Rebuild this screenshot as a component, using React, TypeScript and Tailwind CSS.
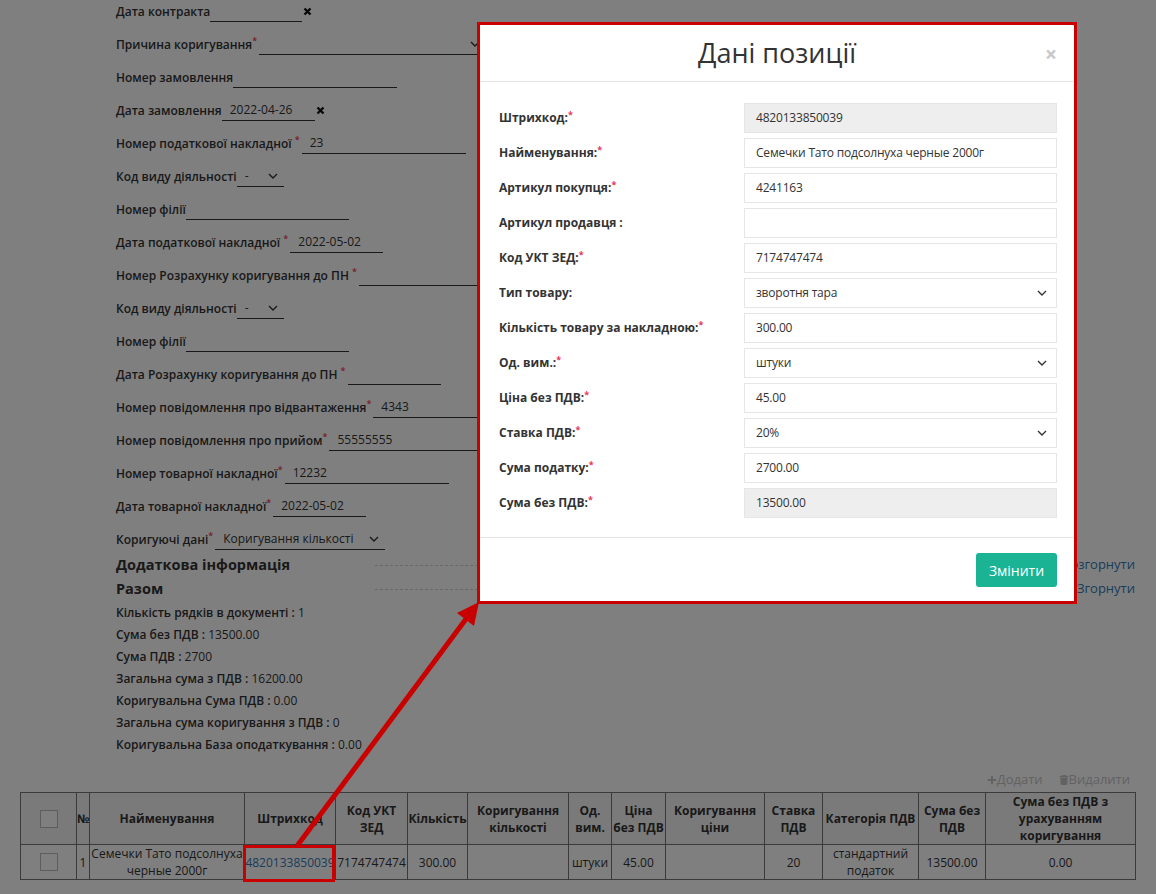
import { FaPlus, FaTrash, FaChevronUp } from "react-icons/fa";

type Field = {
	label: string;
	star?: "tight" | "space";
	kind: "text" | "date" | "select";
	w: string;
	value?: string;
	clear?: boolean;
};

const fields: Field[] = [
	{ label: "Дата контракта", kind: "date", w: "w-[92px]", clear: true },
	{ label: "Причина коригування", star: "tight", kind: "select", w: "w-[227px]" },
	{ label: "Номер замовлення", kind: "text", w: "w-[164px]" },
	{ label: "Дата замовлення", kind: "date", w: "w-[93px]", value: "2022-04-26", clear: true },
	{ label: "Номер податкової накладної", star: "space", kind: "text", w: "w-[164px]", value: "23" },
	{ label: "Код виду діяльності", kind: "select", w: "w-[47px]", value: "-" },
	{ label: "Номер філії", kind: "text", w: "w-[163px]" },
	{ label: "Дата податкової накладної", star: "space", kind: "date", w: "w-[93px]", value: "2022-05-02" },
	{ label: "Номер Розрахунку коригування до ПН", star: "space", kind: "text", w: "w-[164px]" },
	{ label: "Код виду діяльності", kind: "select", w: "w-[47px]", value: "-" },
	{ label: "Номер філії", kind: "text", w: "w-[163px]" },
	{ label: "Дата Розрахунку коригування до ПН", star: "space", kind: "date", w: "w-[93px]" },
	{ label: "Номер повідомлення про відвантаження", star: "tight", kind: "text", w: "w-[164px]", value: "4343" },
	{ label: "Номер повідомлення про прийом", star: "tight", kind: "text", w: "w-[164px]", value: "55555555" },
	{ label: "Номер товарної накладної", star: "tight", kind: "text", w: "w-[164px]", value: "12232" },
	{ label: "Дата товарної накладної", star: "tight", kind: "date", w: "w-[93px]", value: "2022-05-02" },
	{ label: "Коригуючі дані", star: "tight", kind: "select", w: "w-[170px]", value: "Коригування кількості" },
];

const totals = [
	["Кількість рядків в документі :", "1"],
	["Сума без ПДВ :", "13500.00"],
	["Сума ПДВ :", "2700"],
	["Загальна сума з ПДВ :", "16200.00"],
	["Коригувальна Сума ПДВ :", "0.00"],
	["Загальна сума коригування з ПДВ :", "0"],
	["Коригувальна База оподаткування :", "0.00"],
];

const columns = [
	{ title: [""], w: "w-[56px]" },
	{ title: ["№"], w: "w-[13px]" },
	{ title: ["Найменування"], w: "w-[155px]" },
	{ title: ["Штрихкод"], w: "w-[91px]" },
	{ title: ["Код УКТ ЗЕД"], w: "w-[72px]" },
	{ title: ["Кількість"], w: "w-[60px]" },
	{ title: ["Коригування кількості"], w: "w-[101px]" },
	{ title: ["Од. вим."], w: "w-[43px]" },
	{ title: ["Ціна", "без ПДВ"], w: "w-[54px]" },
	{ title: ["Коригування ціни"], w: "w-[99px]" },
	{ title: ["Ставка ПДВ"], w: "w-[58px]" },
	{ title: ["Категорія ПДВ"], w: "w-[96px]" },
	{ title: ["Сума без ПДВ"], w: "w-[67px]" },
	{ title: ["Сума без ПДВ з урахуванням коригування"], w: "w-[150px]" },
];

const modalRows = [
	{ label: "Штрихкод:", star: true, value: "4820133850039", disabled: true },
	{ label: "Найменування:", star: true, value: "Семечки Тато подсолнуха черные 2000г" },
	{ label: "Артикул покупця:", star: true, value: "4241163" },
	{ label: "Артикул продавця :", star: false, value: "" },
	{ label: "Код УКТ ЗЕД:", star: true, value: "7174747474" },
	{ label: "Тип товару:", star: false, value: "зворотня тара", select: true },
	{ label: "Кількість товару за накладною:", star: true, value: "300.00" },
	{ label: "Од. вим.:", star: true, value: "штуки", select: true },
	{ label: "Ціна без ПДВ:", star: true, value: "45.00" },
	{ label: "Ставка ПДВ:", star: true, value: "20%", select: true },
	{ label: "Сума податку:", star: true, value: "2700.00" },
	{ label: "Сума без ПДВ:", star: true, value: "13500.00", disabled: true },
];

const Chevron = ({ color = "#333" }: { color?: string }) => (
	<svg width="10" height="6" viewBox="0 0 10 6" className="shrink-0">
		<path d="M1 1l4 4 4-4" fill="none" stroke={color} strokeWidth="1.4" />
	</svg>
);

const ClearX = () => (
	<svg width="9" height="9" viewBox="0 0 9 9" className="ml-[1px]">
		<path d="M1.5 1.5l6 6M7.5 1.5l-6 6" stroke="#111" strokeWidth="2.4" />
	</svg>
);

const Star = () => <sup className="text-[#e8375d]">*</sup>;

const FormRow = ({ f }: { f: Field }) => (
	<div className="flex h-[33px] items-center whitespace-nowrap">
		<span className="font-semibold">
			{f.label}
			{f.star === "space" && " "}
			{f.star && <Star />}
		</span>
		<div className={`${f.w} ${f.star ? "ml-[2px]" : ""} flex h-[21px] shrink-0 items-center border-b border-[#333] pl-[8px] pr-[6px]`}>
			<span className="flex-1 overflow-hidden">{f.value}</span>
			{f.kind === "select" && <Chevron />}
		</div>
		{f.clear && <ClearX />}
	</div>
);

const td = "border border-[#777] p-0";

const App = () => {
	return (
		<div className="relative h-[894px] w-[1156px] overflow-hidden bg-white font-['Open_Sans',sans-serif] text-[12px] text-[#333]">
			<div className="pl-[20px] pr-[21px]">
				<div className="-mt-[5px] pl-[96px]">
					{fields.map((f, i) => (
						<FormRow key={i} f={f} />
					))}

					<div className="-mt-[3px] flex h-[24px] items-center">
						<h3 className="w-[259px] text-[14.5px] font-bold">Додаткова інформація</h3>
						<div className="flex-1 border-b border-dashed border-[#d0d0d0]" />
						<a className="ml-[6px] text-[13px] text-[#337ab7]">
							<FaChevronUp className="mr-[3px] inline text-[9px]" />
							Розгорнути
						</a>
					</div>
					<div className="flex h-[24px] items-center">
						<h3 className="w-[259px] text-[14.5px] font-bold">Разом</h3>
						<div className="flex-1 border-b border-dashed border-[#d0d0d0]" />
						<a className="ml-[6px] text-[13px] text-[#337ab7]">
							<FaChevronUp className="mr-[3px] inline text-[9px]" />
							Згорнути
						</a>
					</div>

					<div className="mt-[1px]">
						{totals.map(([k, v], i) => (
							<div key={i} className="h-[22px] leading-[22px]">
								<span className="font-semibold">{k}</span> {v}
							</div>
						))}
					</div>
				</div>

				<div className="mt-[13px] flex h-[22px] items-center justify-end gap-[16px] pr-[5px] text-[13px] text-[#c4c4c4]">
					<span className="flex items-center">
						<FaPlus className="text-[10px]" />
						Додати
					</span>
					<span className="flex items-center">
						<FaTrash className="text-[10px]" />
						Видалити
					</span>
				</div>

				<table className="mt-[1px] w-[1115px] table-fixed border-collapse text-center leading-[17px]">
					<thead>
						<tr className="bg-[#f5f5f5]">
							{columns.map((c, i) => (
								<th key={i} className={`${c.w} ${td} font-bold`}>
									{i === 0 ? (
										<span className="mx-auto block h-[18px] w-[18px] border border-[#bbb] bg-white" />
									) : (
										c.title.map((t, j) => (
											<span key={j} className="block">
												{t}
											</span>
										))
									)}
								</th>
							))}
						</tr>
					</thead>
					<tbody>
						<tr>
							<td className={td}>
								<span className="mx-auto block h-[18px] w-[18px] border border-[#bbb] bg-white" />
							</td>
							<td className={td}>1</td>
							<td className={td}>Семечки Тато подсолнуха черные 2000г</td>
							<td className={`${td} text-[#337ab7]`}>4820133850039</td>
							<td className={td}>7174747474</td>
							<td className={td}>300.00</td>
							<td className={td}></td>
							<td className={td}>штуки</td>
							<td className={td}>45.00</td>
							<td className={td}></td>
							<td className={td}>20</td>
							<td className={td}>стандартний податок</td>
							<td className={td}>13500.00</td>
							<td className={td}>0.00</td>
						</tr>
					</tbody>
				</table>
			</div>

			{/* backdrop */}
			<div className="absolute inset-0 bg-black/50" />

			{/* modal */}
			<div className="absolute left-[477px] top-[22px] w-[600px] border-[3px] border-[#c80000] bg-white">
				<div className="relative flex h-[57px] items-center justify-center border-b border-[#e5e5e5]">
					<h4 className="text-[27px] text-[#333]">Дані позиції</h4>
					<span className="absolute right-[17px] top-[19px] text-[21px] font-bold leading-none text-[#c8c8c8]">×</span>
				</div>
				<div className="flex flex-col gap-[5px] pb-[19px] pl-[19px] pr-[17px] pt-[21px]">
					{modalRows.map((r, i) => (
						<div key={i} className="flex h-[30px] items-center">
							<label className="w-[245px] font-bold">
								{r.label}
								{r.star && <Star />}
							</label>
							<div
								className={`flex h-[30px] flex-1 items-center border border-[#e5e6e7] pl-[11px] pr-[9px] tracking-[-0.2px] ${r.disabled ? "bg-[#eeeeee]" : "bg-white"}`}
							>
								<span className="flex-1">{r.value}</span>
								{r.select && <Chevron />}
							</div>
						</div>
					))}
				</div>
				<div className="flex justify-end border-t border-[#e5e5e5] pb-[14px] pr-[17px] pt-[15px]">
					<button className="h-[34px] w-[81px] rounded-[3px] bg-[#1ab394] text-[14px] text-white">Змінити</button>
				</div>
			</div>

			{/* annotation */}
			<svg className="pointer-events-none absolute left-0 top-0" width={1156} height={894}>
				<rect x={244.5} y={846.5} width={89} height={34} fill="none" stroke="#c80000" strokeWidth={3} />
				<line x1={297} y1={846} x2={466} y2={619} stroke="#c80000" strokeWidth={5} />
				<polygon points="479,602 474,626 457,613" fill="#c80000" />
			</svg>
		</div>
	);
};

export default App;
